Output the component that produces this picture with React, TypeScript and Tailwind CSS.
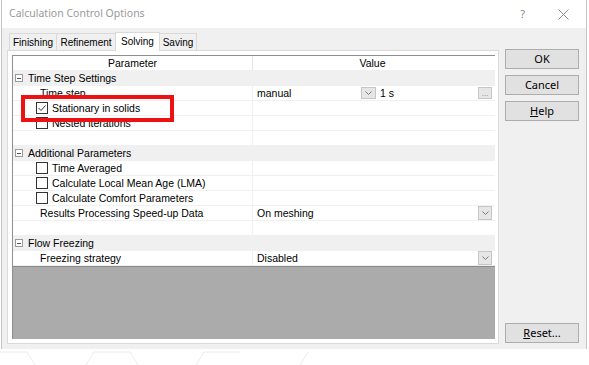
import React from "react";

const sans = { fontFamily: '"Liberation Sans", Arial, sans-serif' };
const ui = { fontFamily: '"Noto Sans", "Open Sans", sans-serif' };

function Minus() {
  return (
    <span className="w-[8px] h-[8px] border border-[#9a9a9a] bg-white flex items-center justify-center mr-[5px] ml-[2px]">
      <span className="w-[4px] h-px bg-[#555]" />
    </span>
  );
}

function Check({ on }: { on?: boolean }) {
  return (
    <span className="w-[12px] h-[12px] border border-[#333] bg-white flex items-center justify-center ml-[23px] mr-[4px] shrink-0">
      {on && (
        <svg width="10" height="10" viewBox="0 0 10 10">
          <polyline points="1.5,5 4,7.5 8.5,2.5" fill="none" stroke="#333" strokeWidth="1" />
        </svg>
      )}
    </span>
  );
}

function Arrow({ className }: { className: string }) {
  return (
    <span className={`bg-[#e6e6e6] border border-[#c6c6c6] flex items-center justify-center shrink-0 ${className}`}>
      <svg width="7" height="4" viewBox="0 0 7 4">
        <polyline points="0.5,0.5 3.5,3.5 6.5,0.5" fill="none" stroke="#7a7a7a" strokeWidth="1" />
      </svg>
    </span>
  );
}

function Category({ label }: { label: string }) {
  return (
    <div className="h-[15px] bg-[#f0f0f0] flex items-center border-b border-[#f0f0f0]">
      <Minus />
      <span className="pt-px">{label}</span>
    </div>
  );
}

function Row({ children, value }: { children?: React.ReactNode; value?: React.ReactNode }) {
  return (
    <div className="h-[15px] flex border-b border-[#f0f0f0]">
      <div className="w-[240px] flex items-center border-r border-[#f0f0f0] shrink-0">{children}</div>
      <div className="flex-1 flex items-center pl-[4px]">{value}</div>
    </div>
  );
}

function Btn({ children, className = "" }: { children: React.ReactNode; className?: string }) {
  return (
    <div
      className={`w-[74px] h-[20px] bg-[#e1e1e1] border border-[#adadad] flex items-center justify-center text-[11px] text-black ${className}`}
      style={ui}
    >
      {children}
    </div>
  );
}

const tabs = [
  { label: "Finishing", w: "w-[48px]" },
  { label: "Refinement", w: "w-[60px]" },
  { label: "Solving", w: "w-[45px]", active: true },
  { label: "Saving", w: "w-[38px]" },
];

export default function App() {
  return (
    <div className="w-[589px] h-[365px] bg-white relative overflow-hidden text-black" style={sans}>
      <div className="ml-[1px] w-[586px] h-[349px] border-l border-r border-[#c4c4c4] flex flex-col">
        {/* title bar */}
        <div className="h-[28px] bg-white flex items-center shrink-0">
          <span className="ml-[7px] text-[10.5px] text-[#9a9a9a]" style={ui}>
            Calculation Control Options
          </span>
          <span className="ml-auto text-[11px] text-[#8a8a8a] mr-[33px]" style={ui}>?</span>
          <svg width="11" height="11" viewBox="0 0 11 11" className="mr-[17px]">
            <path d="M0.5 0.5 L10.5 10.5 M10.5 0.5 L0.5 10.5" stroke="#8a8a8a" strokeWidth="1" />
          </svg>
        </div>

        {/* body */}
        <div className="flex-1 bg-[#f0f0f0] flex pl-[5px] pt-[3px] pb-[5px]">
          <div className="w-[492px] flex flex-col">
            <div className="h-[19px] flex items-end pl-[2px] text-[10px]">
              {tabs.map((t) =>
                t.active ? (
                  <div
                    key={t.label}
                    className={`${t.w} h-[19px] -ml-px bg-white border border-b-0 border-[#d9d9d9] flex items-center justify-center relative z-10 mb-[-1px] pb-[1px]`}
                  >
                    {t.label}
                  </div>
                ) : (
                  <div
                    key={t.label}
                    className={`${t.w} h-[17px] -ml-px first:ml-0 bg-[#f0f0f0] border border-b-0 border-[#d9d9d9] flex items-center justify-center pt-[1px]`}
                  >
                    {t.label}
                  </div>
                )
              )}
            </div>
            <div className="flex-1 bg-white border border-[#d9d9d9] pl-[4px] pr-[3px] pt-[4px] pb-[4px] flex">
              <div className="flex-1 border-l border-t border-[#8f8f8f] flex flex-col text-[10.5px]">
                <div className="h-[15px] flex border-b border-[#f0f0f0]">
                  <div className="w-[240px] flex items-center justify-center border-r border-[#e6e6e6] pt-px">Parameter</div>
                  <div className="flex-1 flex items-center justify-center pr-[3px] pt-px">Value</div>
                </div>
                <Category label="Time Step Settings" />
                <Row
                  value={
                    <>
                      <span className="w-[104px] pt-px">manual</span>
                      <Arrow className="w-[15px] h-[12px]" />
                      <span className="ml-[4px] pt-px">1 s</span>
                      <span className="ml-auto mr-[3px] w-[14px] h-[12px] bg-[#e6e6e6] border border-[#c6c6c6] flex items-end justify-center text-[8px] leading-[8px] text-[#777]">
                        ...
                      </span>
                    </>
                  }
                >
                  <span className="ml-[27px] pt-px">Time step</span>
                </Row>
                <Row>
                  <Check on />
                  <span className="pt-px">Stationary in solids</span>
                </Row>
                <Row>
                  <Check />
                  <span className="pt-px">Nested iterations</span>
                </Row>
                <Row />
                <Category label="Additional Parameters" />
                <Row>
                  <Check />
                  <span className="pt-px">Time Averaged</span>
                </Row>
                <Row>
                  <Check />
                  <span className="pt-px">Calculate Local Mean Age (LMA)</span>
                </Row>
                <Row>
                  <Check />
                  <span className="pt-px">Calculate Comfort Parameters</span>
                </Row>
                <Row
                  value={
                    <>
                      <span className="pt-px">On meshing</span>
                      <Arrow className="ml-auto mr-[3px] w-[14px] h-[14px]" />
                    </>
                  }
                >
                  <span className="ml-[27px] pt-px">Results Processing Speed-up Data</span>
                </Row>
                <Row />
                <Category label="Flow Freezing" />
                <Row
                  value={
                    <>
                      <span className="pt-px">Disabled</span>
                      <Arrow className="ml-auto mr-[3px] w-[14px] h-[14px]" />
                    </>
                  }
                >
                  <span className="ml-[27px] pt-px">Freezing strategy</span>
                </Row>
                <div className="flex-1 bg-[#ababab] border-t border-[#8a8a8a]" />
              </div>
            </div>
          </div>

          <div className="ml-[6px] flex flex-col pt-[18px]">
            <Btn>OK</Btn>
            <Btn className="mt-[6px]">Cancel</Btn>
            <Btn className="mt-[6px]">
              <span className="underline">H</span>elp
            </Btn>
            <Btn className="mt-auto mb-[1px]">
              <span className="underline">R</span>eset...
            </Btn>
          </div>
        </div>
      </div>

      {/* desktop background lines below the window */}
      <svg width="589" height="16" viewBox="0 0 589 16" className="block">
        <g fill="none" stroke="#ececec" strokeWidth="1">
          <polyline points="0,3 27,3 35,16" />
          <polyline points="86,16 94,3 130,3 138,16" />
          <polyline points="196,16 204,3 240,3" />
          <polyline points="300,16 308,3" />
        </g>
      </svg>

      {/* red highlight annotation */}
      <div className="absolute left-[21px] top-[95px] w-[153px] h-[27px] border-[4px] border-[#ee1111]" />
    </div>
  );
}
